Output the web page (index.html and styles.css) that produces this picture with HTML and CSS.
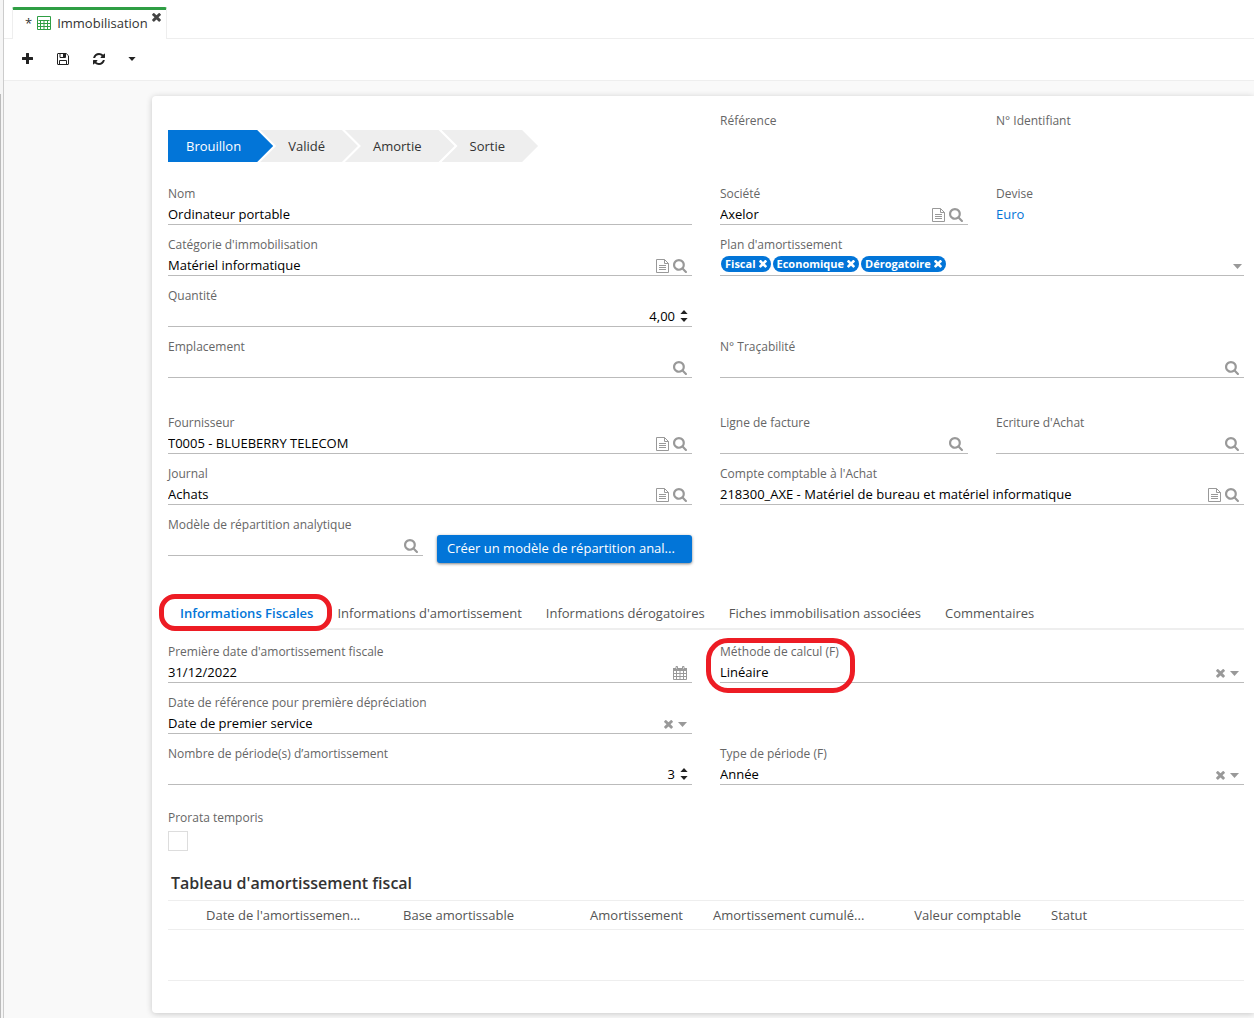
FILE: index.html
```html
<!DOCTYPE html>
<html lang="fr">
<head>
<meta charset="utf-8">
<meta name="viewport" content="width=device-width, initial-scale=1">
<title>Immobilisation</title>
<link rel="stylesheet" href="styles.css">
</head>
<body>
<svg class="sprite" aria-hidden="true">
  <symbol id="i-search" viewBox="0 128 1664 1664"><path d="M1152 832q0-185-131.500-316.500T704 384 387.500 515.500 256 832t131.500 316.500T704 1280t316.500-131.500T1152 832zm512 832q0 52-38 90t-90 38q-54 0-90-38l-343-342q-179 124-399 124-143 0-273.500-55.500t-225-150-150-225T0 832t55.500-273.500 150-225 225-150T704 128t273.500 55.500 225 150 150 225T1408 832q0 220-124 399l343 343q37 37 37 90z"/></symbol>
  <symbol id="i-times" viewBox="100 400 1208 1160"><path d="M1298 1322q0 40-28 68l-136 136q-28 28-68 28t-68-28l-294-294-294 294q-28 28-68 28t-68-28l-136-136q-28-28-28-68t28-68l294-294-294-294q-28-28-28-68t28-68l136-136q28-28 68-28t68 28l294 294 294-294q28-28 68-28t68 28l136 136q28 28 28 68t-28 68l-294 294 294 294q28 28 28 68z"/></symbol>
  <symbol id="i-refresh" viewBox="0 0 1792 1792"><path d="M1639 1056q0 5-1 7-64 268-268 434.500T892 1664q-146 0-282.500-55T366 1452l-129 129q-19 19-45 19t-45-19-19-45v-448q0-26 19-45t45-19h448q26 0 45 19t19 45-19 45l-137 137q71 66 161 102t187 36q134 0 250-65t186-179q11-17 53-117 8-23 30-23h192q13 0 22.500 9.500t9.500 22.500zm25-800v448q0 26-19 45t-45 19h-448q-26 0-45-19t-19-45 19-45l138-138q-148-137-349-137-134 0-250 65T461 628q-11 17-53 117-8 23-30 23H179q-13 0-22.500-9.500T147 736v-7q65-268 270-434.500T897 128q146 0 284 55.500T1426 340l130-129q19-19 45-19t45 19 19 45z"/></symbol>
  <symbol id="i-plus" viewBox="0 0 11 11"><path d="M4.500 0h2q.5 0 .5.500V4h3.500q.5 0 .5.500v2q0 .5-.5.500H7v3.500q0 .5-.5.500h-2q-.5 0-.5-.5V7H.5Q0 7 0 6.500v-2Q0 4 .5 4H4V.5Q4 0 4.500 0z"/></symbol>
  <symbol id="i-save" viewBox="0 0 12 12"><path fill="none" stroke="currentColor" d="M1 .5h8.200l2.300 2.300V11q0 .5-.5.500H1q-.5 0-.5-.5V1Q.5.500 1 .5zM2.500 11.500v-4h7v4M3 .5v4h5.500v-4"/><path d="M6 1h2v3H6z"/></symbol>
  <symbol id="i-file" viewBox="0 0 13 14"><path fill="none" stroke="currentColor" d="M.5.500h8l4 4v9H.5zM8.500.500v4h4M3 6.500h7M3 8.500h7M3 10.500h7"/></symbol>
  <symbol id="i-calendar" viewBox="0 0 14 14"><path fill="none" stroke="currentColor" d="M.5 3.500v10h13v-10M3.500 5v8.500M7 5v8.500M10.500 5v8.500M.5 7.500h13M.5 10.500h13"/><path d="M0 2h14v3H0z"/><path stroke="currentColor" fill="#fff" d="M3 .5h1.500v3H3zM9.500.500H11v3H9.500z"/></symbol>
  <symbol id="i-grid" viewBox="0 0 14 14"><path fill="none" stroke="currentColor" d="M.5.500h13v13H.5zM.5 7.500h13M.5 10.500h13M3.500 5v8.500M7 5v8.500M10.500 5v8.500M1.500 4.500h11"/></symbol>
  <symbol id="i-caret" viewBox="0 0 9 5"><path d="M0 0h9L4.500 5z"/></symbol>
  <symbol id="i-up" viewBox="0 0 9 5"><path d="M0 5h9L4.500 0z"/></symbol>
</svg>

<aside class="rail"><div class="rail-thumb"></div></aside>

<div class="app">
  <header class="tabbar">
    <div class="doc-tab">
      <span>*</span>
      <svg class="ico14 green"><use href="#i-grid"/></svg>
      <span class="doc-name">Immobilisation</span>
      <button class="doc-close" type="button" aria-label="Fermer"><svg class="ico9"><use href="#i-times"/></svg></button>
    </div>
  </header>

  <div class="toolbar">
    <button type="button" aria-label="Nouveau"><svg class="ico11"><use href="#i-plus"/></svg></button>
    <button type="button" aria-label="Enregistrer"><svg class="ico12"><use href="#i-save"/></svg></button>
    <button type="button" aria-label="Actualiser"><svg class="ico14"><use href="#i-refresh"/></svg></button>
    <button type="button" class="more" aria-label="Plus"><svg class="caret8"><use href="#i-caret"/></svg></button>
  </div>

  <main class="content">
    <form class="card">
      <div class="row head-row">
        <ol class="steps span2">
          <li class="step current">Brouillon</li>
          <li class="step">Validé</li>
          <li class="step">Amortie</li>
          <li class="step">Sortie</li>
        </ol>
        <div class="field"><span class="label">Référence</span></div>
        <div class="field"><span class="label">N° Identifiant</span></div>
      </div>

      <div class="row">
        <div class="field span2"><label for="nom">Nom</label>
          <div class="control"><input id="nom" value="Ordinateur portable"></div></div>
        <div class="field"><label for="soc">Société</label>
          <div class="control"><input id="soc" value="Axelor">
            <button type="button" class="act" aria-label="Ouvrir"><svg class="file"><use href="#i-file"/></svg></button>
            <button type="button" class="act" aria-label="Rechercher"><svg class="ico14"><use href="#i-search"/></svg></button></div></div>
        <div class="field"><span class="label">Devise</span><a class="link" href="#">Euro</a></div>
      </div>

      <div class="row">
        <div class="field span2"><label for="cat">Catégorie d'immobilisation</label>
          <div class="control"><input id="cat" value="Matériel informatique">
            <button type="button" class="act" aria-label="Ouvrir"><svg class="file"><use href="#i-file"/></svg></button>
            <button type="button" class="act" aria-label="Rechercher"><svg class="ico14"><use href="#i-search"/></svg></button></div></div>
        <div class="field span2"><span class="label">Plan d'amortissement</span>
          <div class="control tagged">
            <ul class="tags">
              <li>Fiscal<button type="button" aria-label="Retirer Fiscal"><svg class="ico8"><use href="#i-times"/></svg></button></li>
              <li>Economique<button type="button" aria-label="Retirer Economique"><svg class="ico8"><use href="#i-times"/></svg></button></li>
              <li>Dérogatoire<button type="button" aria-label="Retirer Dérogatoire"><svg class="ico8"><use href="#i-times"/></svg></button></li>
            </ul>
            <button type="button" class="act small" aria-label="Dérouler"><svg class="caret"><use href="#i-caret"/></svg></button></div></div>
      </div>

      <div class="row">
        <div class="field span2"><label for="qte">Quantité</label>
          <div class="control"><input id="qte" class="num" inputmode="decimal" value="4,00">
            <span class="spin"><button type="button" aria-label="Augmenter"><svg class="caret8"><use href="#i-up"/></svg></button><button type="button" aria-label="Diminuer"><svg class="caret8"><use href="#i-caret"/></svg></button></span></div></div>
      </div>

      <div class="row">
        <div class="field span2"><label for="emp">Emplacement</label>
          <div class="control"><input id="emp">
            <button type="button" class="act" aria-label="Rechercher"><svg class="ico14"><use href="#i-search"/></svg></button></div></div>
        <div class="field span2"><label for="tra">N° Traçabilité</label>
          <div class="control"><input id="tra">
            <button type="button" class="act" aria-label="Rechercher"><svg class="ico14"><use href="#i-search"/></svg></button></div></div>
      </div>

      <div class="row section">
        <div class="field span2"><label for="fou">Fournisseur</label>
          <div class="control"><input id="fou" value="T0005 - BLUEBERRY TELECOM">
            <button type="button" class="act" aria-label="Ouvrir"><svg class="file"><use href="#i-file"/></svg></button>
            <button type="button" class="act" aria-label="Rechercher"><svg class="ico14"><use href="#i-search"/></svg></button></div></div>
        <div class="field"><label for="lig">Ligne de facture</label>
          <div class="control"><input id="lig">
            <button type="button" class="act" aria-label="Rechercher"><svg class="ico14"><use href="#i-search"/></svg></button></div></div>
        <div class="field"><label for="ecr">Ecriture d'Achat</label>
          <div class="control"><input id="ecr">
            <button type="button" class="act" aria-label="Rechercher"><svg class="ico14"><use href="#i-search"/></svg></button></div></div>
      </div>

      <div class="row">
        <div class="field span2"><label for="jou">Journal</label>
          <div class="control"><input id="jou" value="Achats">
            <button type="button" class="act" aria-label="Ouvrir"><svg class="file"><use href="#i-file"/></svg></button>
            <button type="button" class="act" aria-label="Rechercher"><svg class="ico14"><use href="#i-search"/></svg></button></div></div>
        <div class="field span2"><label for="cpt">Compte comptable à l'Achat</label>
          <div class="control"><input id="cpt" value="218300_AXE - Matériel de bureau et matériel informatique">
            <button type="button" class="act" aria-label="Ouvrir"><svg class="file"><use href="#i-file"/></svg></button>
            <button type="button" class="act" aria-label="Rechercher"><svg class="ico14"><use href="#i-search"/></svg></button></div></div>
      </div>

      <div class="row">
        <div class="pair span2">
          <div class="field"><label for="mod">Modèle de répartition analytique</label>
            <div class="control"><input id="mod">
              <button type="button" class="act" aria-label="Rechercher"><svg class="ico14"><use href="#i-search"/></svg></button></div></div>
          <button type="button" class="primary">Créer un modèle de répartition anal...</button>
        </div>
      </div>

      <nav class="tabs">
        <a class="active" href="#">Informations Fiscales</a>
        <a href="#">Informations d'amortissement</a>
        <a href="#">Informations dérogatoires</a>
        <a href="#">Fiches immobilisation associées</a>
        <a href="#">Commentaires</a>
      </nav>

      <div class="row">
        <div class="field span2"><label for="dat">Première date d'amortissement fiscale</label>
          <div class="control"><input id="dat" value="31/12/2022">
            <button type="button" class="act" aria-label="Calendrier"><svg class="ico14"><use href="#i-calendar"/></svg></button></div></div>
        <div class="field span2 circled"><label for="met">Méthode de calcul (F)</label>
          <div class="control"><select id="met"><option>Linéaire</option></select>
            <button type="button" class="act small" aria-label="Effacer"><svg class="ico9"><use href="#i-times"/></svg></button>
            <span class="act small"><svg class="caret"><use href="#i-caret"/></svg></span></div></div>
      </div>

      <div class="row">
        <div class="field span2"><label for="ref">Date de référence pour première dépréciation</label>
          <div class="control"><select id="ref"><option>Date de premier service</option></select>
            <button type="button" class="act small" aria-label="Effacer"><svg class="ico9"><use href="#i-times"/></svg></button>
            <span class="act small"><svg class="caret"><use href="#i-caret"/></svg></span></div></div>
      </div>

      <div class="row">
        <div class="field span2"><label for="nbp">Nombre de période(s) d’amortissement</label>
          <div class="control"><input id="nbp" class="num" inputmode="numeric" value="3">
            <span class="spin"><button type="button" aria-label="Augmenter"><svg class="caret8"><use href="#i-up"/></svg></button><button type="button" aria-label="Diminuer"><svg class="caret8"><use href="#i-caret"/></svg></button></span></div></div>
        <div class="field span2"><label for="typ">Type de période (F)</label>
          <div class="control"><select id="typ"><option>Année</option></select>
            <button type="button" class="act small" aria-label="Effacer"><svg class="ico9"><use href="#i-times"/></svg></button>
            <span class="act small"><svg class="caret"><use href="#i-caret"/></svg></span></div></div>
      </div>

      <div class="check-field">
        <label for="pro">Prorata temporis</label>
        <input id="pro" type="checkbox">
      </div>

      <h2>Tableau d'amortissement fiscal</h2>
      <table>
        <colgroup><col class="c-sel"><col><col><col><col><col><col class="c-status"></colgroup>
        <thead>
          <tr><th></th><th class="cut">Date de l'amortissemen...</th><th class="right">Base amortissable</th><th class="right">Amortissement</th><th class="cut">Amortissement cumulé...</th><th class="right">Valeur comptable</th><th>Statut</th></tr>
        </thead>
        <tbody><tr><td colspan="7"></td></tr></tbody>
      </table>
    </form>
  </main>
</div>
</body>
</html>
```
FILE: styles.css
```css
*, *::before, *::after { box-sizing: border-box; }

body {
  margin: 0;
  display: flex;
  min-height: 100vh;
  background: #fff;
  color: #333;
  font: 13px/20px "Open Sans", "Noto Sans", sans-serif;
}

button, input, select { font: inherit; color: inherit; }

button {
  padding: 0;
  border: 0;
  background: none;
  cursor: pointer;
}

svg { display: block; fill: currentColor; }
.sprite { position: absolute; width: 0; height: 0; }
.ico8 { width: 8px; height: 8px; }
.ico9 { width: 9px; height: 9px; }
.ico11 { width: 11px; height: 11px; }
.ico12 { width: 12px; height: 12px; }
.ico14 { width: 14px; height: 14px; }
.file { width: 13px; height: 14px; }
.caret { width: 9px; height: 5px; }
.caret8 { width: 8px; height: 4px; }
.green { color: #2f9e44; }

.rail {
  flex: none;
  width: 4px;
  padding-top: 94px;
  display: flex;
  background: #f5f5f5;
  border-right: 1px solid #ccc;
}
.rail-thumb { width: 1px; background: #bbb; }

.app {
  flex: 1;
  min-width: 0;
  display: flex;
  flex-direction: column;
}

.tabbar {
  display: flex;
  height: 39px;
  padding: 7px 8px 0;
  border-bottom: 1px solid #eee;
}
.doc-tab {
  display: flex;
  align-items: center;
  height: 32px;
  padding: 0 5px 4px 12px;
  background: #fff;
  border: 1px solid #eee;
  border-top: 3px solid #2f9e44;
  border-bottom: 0;
  border-radius: 2px 2px 0 0;
}
.doc-tab .green { margin: 0 6px 0 5px; }
.doc-close { align-self: flex-start; margin: 3px 0 0 4px; color: #444; }

.toolbar {
  display: flex;
  height: 42px;
  padding: 0 5px 2px;
  border-bottom: 1px solid #eee;
}
.toolbar button {
  display: grid;
  place-items: center;
  width: 36px;
  color: #222;
}
.toolbar .more { width: 30px; }

.content {
  flex: 1;
  padding: 15px 0 4px 148px;
  background: #f9f9f9;
  overflow: hidden;
}

.card {
  padding: 15px 10px 32px 16px;
  background: #fff;
  border-radius: 4px 0 0 4px;
  box-shadow: 0 1px 6px rgba(0, 0, 0, .2);
}

.row {
  display: grid;
  grid-template-columns: repeat(4, minmax(0, 1fr));
  column-gap: 28px;
  margin-bottom: 10px;
}
.span2 { grid-column: span 2; }
.section { margin-top: 35px; }
.head-row { margin-bottom: 22px; }

.steps {
  display: flex;
  margin: 19px 0 0;
  padding: 0;
  list-style: none;
}
.step {
  height: 32px;
  padding: 0 33px 0 28px;
  line-height: 32px;
  background: #eee;
  clip-path: polygon(0 0, calc(100% - 16px) 0, 100% 50%, calc(100% - 16px) 100%, 0 100%, 16px 50%);
}
.step + .step { margin-left: -13px; }
.step.current {
  padding: 0 32px 0 18px;
  color: #fff;
  background: #0275d8;
  clip-path: polygon(0 0, calc(100% - 16px) 0, 100% 50%, calc(100% - 16px) 100%, 0 100%);
}

.field { display: flex; flex-direction: column; min-width: 0; }
.field label, .label, .check-field label {
  height: 20px;
  color: #666;
  font-size: 12px;
  white-space: nowrap;
}
.control {
  display: flex;
  align-items: center;
  height: 21px;
  padding-right: 3px;
  border-bottom: 1px solid #bbb;
}
.control.tagged { padding-right: 0; }
.control input, .control select {
  flex: 1;
  min-width: 0;
  height: 20px;
  padding: 0;
  border: 0;
  outline: 0;
  color: #000;
  background: none;
  appearance: none;
}
.control .num { text-align: right; padding-right: 4px; }
.act {
  flex: none;
  display: grid;
  place-items: center;
  width: 18px;
  height: 18px;
  padding-top: 2px;
  color: #999;
}
.act.small { width: 14px; }
.spin { display: grid; gap: 4px; width: 10px; justify-items: center; color: #222; }
.link { color: #0275d8; }
a { text-decoration: none; }

.tags {
  flex: 1;
  display: flex;
  gap: 2px;
  margin: 0;
  padding: 0 1px 2px;
  list-style: none;
}
.tags li {
  display: flex;
  align-items: center;
  gap: 3px;
  height: 16px;
  padding: 0 4px;
  border-radius: 8px;
  color: #fff;
  background: #0275d8;
  font-size: 11px;
  font-weight: 700;
}

.pair { display: grid; grid-template-columns: 1fr 1fr; gap: 14px; }
.primary {
  height: 28px;
  margin-top: 20px;
  padding: 0 10px 2px;
  overflow: hidden;
  text-align: left;
  text-overflow: ellipsis;
  white-space: nowrap;
  color: #fff;
  background: #0275d8;
  border-radius: 3px;
  box-shadow: 0 1px 3px rgba(0, 0, 0, .5);
}

.tabs {
  display: flex;
  height: 33px;
  margin: 34px 0 12px;
  border-bottom: 2px solid #eee;
}
.tabs a { padding: 6px 12px 0; color: #555; white-space: nowrap; }
.tabs .active { position: relative; color: #0275d8; font-weight: 600; }

/* Red markers that call out the tab and the method field */
.tabs .active::after, .circled::after {
  content: "";
  position: absolute;
  border: 5px solid #ed1c24;
  pointer-events: none;
}
.tabs .active::after { inset: -3px -7px -3px -9px; border-radius: 16px; }
.circled { position: relative; }
.circled::after { top: -4px; left: -14px; width: 149px; height: 55px; border-radius: 22px; }

.check-field {
  display: flex;
  flex-direction: column;
  align-items: flex-start;
  gap: 3px;
  margin-top: 23px;
}
.check-field input {
  width: 20px;
  height: 20px;
  margin: 0;
  appearance: none;
  background: #fff;
  border: 1px solid #ddd;
}

h2 {
  margin: 20px 0 5px;
  padding-left: 3px;
  font-size: 16px;
  line-height: 24px;
  font-weight: 600;
}

table { width: 100%; table-layout: fixed; border-collapse: collapse; }
.c-sel { width: 23px; }
.c-status { width: 208px; }
th {
  height: 29px;
  padding: 0 15px;
  border: solid #eee;
  border-width: 1px 0;
  color: #555;
  font-weight: 400;
  text-align: left;
  white-space: nowrap;
}
th:first-child { padding: 0; }
th.right { text-align: right; }
th.cut { padding-right: 0; }
td { height: 51px; padding: 0; border-bottom: 1px solid #eee; }
```
